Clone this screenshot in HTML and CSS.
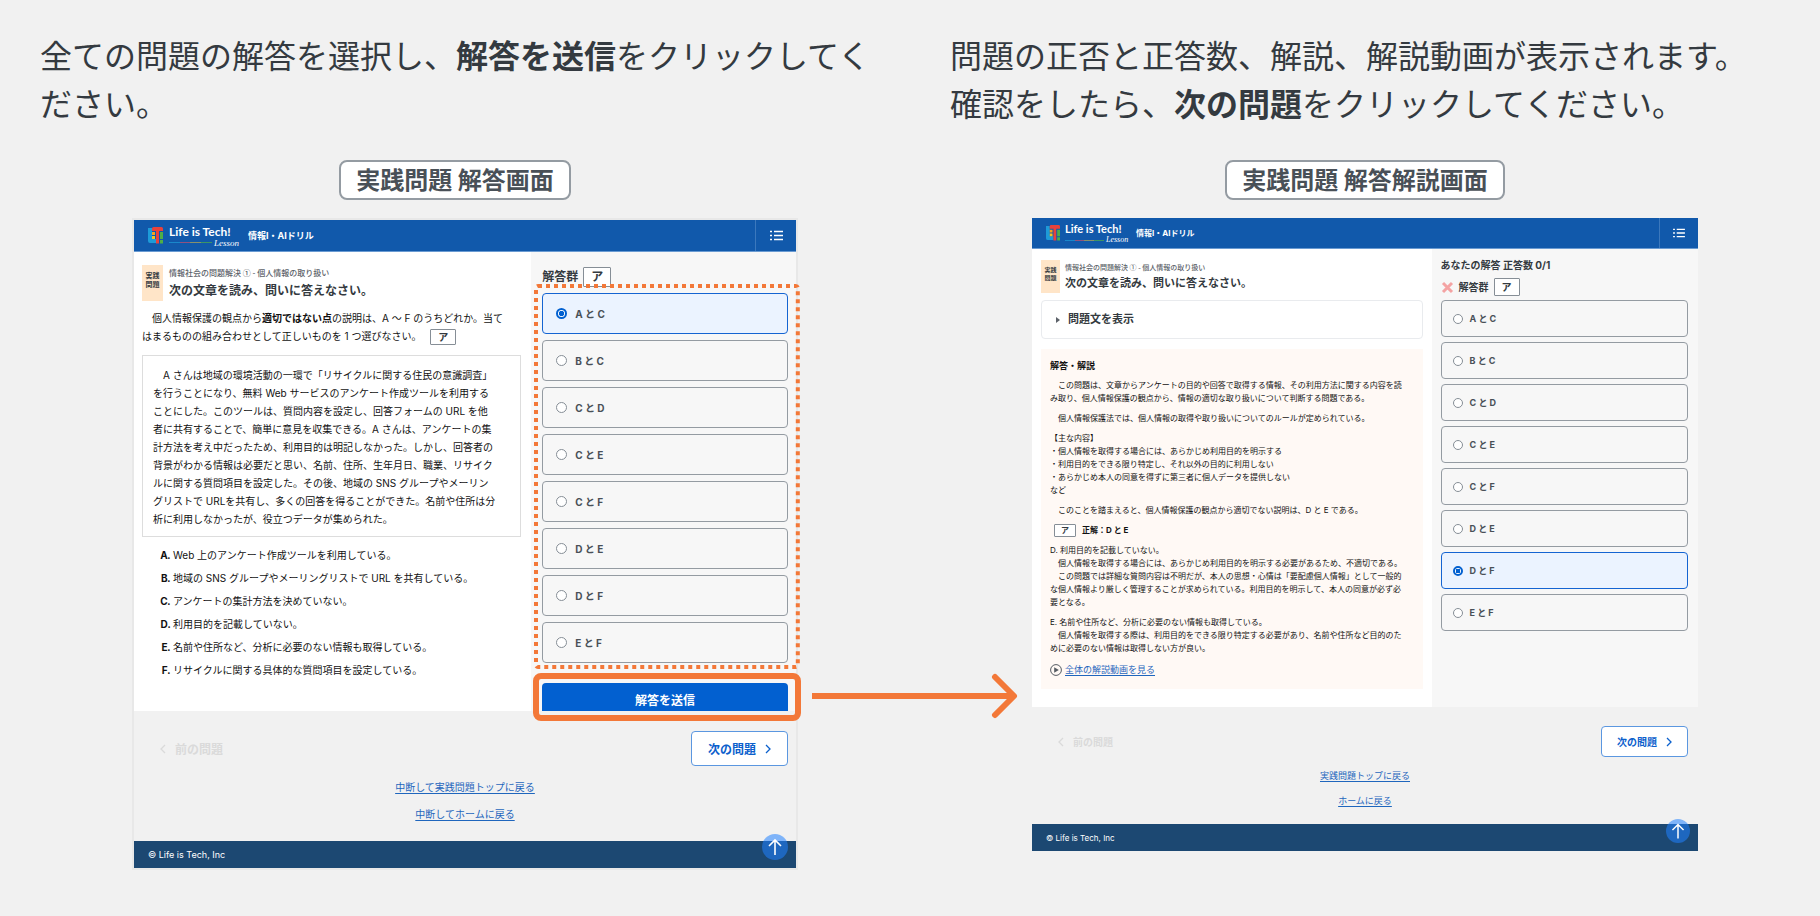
FILE: index.html
```html
<!doctype html>
<html lang="ja">
	<head>
		<meta charset="UTF-8" />
		<meta name="viewport" content="width=device-width, initial-scale=1.0" />
		<title>実践問題の使い方</title>
		<link rel="stylesheet" href="styles.css" />
	</head>
	<body>
		<svg class="sprite" aria-hidden="true">
			<symbol id="logo" viewBox="0 0 15 17">
				<path d="M0 1h4v11h4v4H2a2 2 0 0 1-2-2z" fill="#1d9bd8" />
				<path d="M4 1.500a1.500 1.500 0 0 1 1.500-1.500h8a1.500 1.500 0 0 1 1.500 1.500V4h-4v12.500H8V4H4z" fill="#e8423c" />
				<path d="M4 5h3v3H4z" fill="#f6a21c" />
				<path d="M4 9h3v3H4z" fill="#f7c51e" />
				<path d="M12 5h3v7h-3zM12 13h3v3.500h-3z" fill="#4fae47" />
			</symbol>
			<symbol id="list" viewBox="0 0 13 11">
				<path d="M4 1.500h9M4 5.500h9M4 9.500h9M0 1.500h2M0 5.500h2M0 9.500h2" stroke="#fff" stroke-width="1.400" fill="none" />
			</symbol>
			<symbol id="next" viewBox="0 0 6 10">
				<path d="M1 1l4 4-4 4" stroke="currentColor" stroke-width="1.300" fill="none" />
			</symbol>
			<symbol id="prev" viewBox="0 0 6 10">
				<path d="M5 1L1 5l4 4" stroke="currentColor" stroke-width="1.300" fill="none" />
			</symbol>
			<symbol id="up" viewBox="0 0 26 26">
				<path d="M13 21V6.500M7 12l6-6 6 6" stroke="#fff" stroke-width="1.600" fill="none" />
			</symbol>
		</svg>

		<main class="guide">
			<section class="step">
				<p class="lead">全ての問題の解答を選択し、<b>解答を送信</b>をクリックしてください。</p>
				<h2 class="tag">実践問題 解答画面</h2>

				<div class="screen">
					<header class="bar">
						<svg class="mark"><use href="#logo" /></svg>
						<div class="wordmark">
							<span class="brand">Life is Tech!</span>
							<span class="sub"><span class="stripe"></span><i>Lesson</i></span>
						</div>
						<span class="product">情報I・AIドリル</span>
						<button class="menu" aria-label="メニュー"><svg><use href="#list" /></svg></button>
					</header>

					<div class="main">
						<div class="question">
							<div class="heading">
								<span class="badge">実践<br />問題</span>
								<div>
									<p class="crumb">情報社会の問題解決 ① - 個人情報の取り扱い</p>
									<h3 class="title">次の文章を読み、問いに答えなさい。</h3>
								</div>
							</div>
							<p class="prompt">個人情報保護の観点から<b>適切ではない点</b>の説明は、A ～ F のうちどれか。当て<br />はまるものの組み合わせとして正しいものを 1 つ選びなさい。 <span class="slot">ア</span></p>
							<div class="passage">
								<p>
									A さんは地域の環境活動の一環で「リサイクルに関する住民の意識調査」<br />を行うことになり、無料 Web サービスのアンケート作成ツールを利用する<br />ことにした。このツールは、質問内容を設定し、回答フォームの URL を他<br />者に共有することで、簡単に意見を収集できる。A さんは、アンケートの集<br />計方法を考え中だったため、利用目的は明記しなかった。しかし、回答者の<br />背景がわかる情報は必要だと思い、名前、住所、生年月日、職業、リサイク<br />ルに関する質問項目を設定した。その後、地域の SNS グループやメーリン<br />グリストで URLを共有し、多くの回答を得ることができた。名前や住所は分<br />析に利用しなかったが、役立つデータが集められた。
								</p>
							</div>
							<ol class="choices">
								<li>Web 上のアンケート作成ツールを利用している。</li>
								<li>地域の SNS グループやメーリングリストで URL を共有している。</li>
								<li>アンケートの集計方法を決めていない。</li>
								<li>利用目的を記載していない。</li>
								<li>名前や住所など、分析に必要のない情報も取得している。</li>
								<li>リサイクルに関する具体的な質問項目を設定している。</li>
							</ol>
						</div>

						<div class="answers">
							<div class="group">解答群 <span class="slot">ア</span></div>
							<div class="options">
								<label class="option"><input type="radio" name="answer" checked />A と C</label>
								<label class="option"><input type="radio" name="answer" />B と C</label>
								<label class="option"><input type="radio" name="answer" />C と D</label>
								<label class="option"><input type="radio" name="answer" />C と E</label>
								<label class="option"><input type="radio" name="answer" />C と F</label>
								<label class="option"><input type="radio" name="answer" />D と E</label>
								<label class="option"><input type="radio" name="answer" />D と F</label>
								<label class="option"><input type="radio" name="answer" />E と F</label>
								<svg class="dotted"><rect x="2" y="2" rx="2" /></svg>
							</div>
							<div class="submit">
								<button class="send">解答を送信</button>
								<span class="focus"></span>
								<svg class="arrow" viewBox="0 0 206 46">
									<path d="M0 23h200" />
									<path d="M183 4l19 19-19 19" stroke-linecap="round" />
								</svg>
							</div>
						</div>
					</div>

					<nav class="nav">
						<div class="pager">
							<button class="prev" disabled><svg><use href="#prev" /></svg>前の問題</button>
							<button class="next">次の問題<svg><use href="#next" /></svg></button>
						</div>
						<a href="#">中断して実践問題トップに戻る</a>
						<a href="#">中断してホームに戻る</a>
					</nav>
					<footer class="foot">
						© Life is Tech, Inc
						<button class="top" aria-label="トップへ"><svg><use href="#up" /></svg></button>
					</footer>
				</div>
			</section>

			<section class="step">
				<p class="lead">問題の正否と正答数、解説、解説動画が表示されます。<br />確認をしたら、<b>次の問題</b>をクリックしてください。</p>
				<h2 class="tag">実践問題 解答解説画面</h2>

				<div class="screen result">
					<header class="bar">
						<svg class="mark"><use href="#logo" /></svg>
						<div class="wordmark">
							<span class="brand">Life is Tech!</span>
							<span class="sub"><span class="stripe"></span><i>Lesson</i></span>
						</div>
						<span class="product">情報I・AIドリル</span>
						<button class="menu" aria-label="メニュー"><svg><use href="#list" /></svg></button>
					</header>

					<div class="main">
						<div class="question">
							<div class="heading">
								<span class="badge">実践<br />問題</span>
								<div>
									<p class="crumb">情報社会の問題解決 ① - 個人情報の取り扱い</p>
									<h3 class="title">次の文章を読み、問いに答えなさい。</h3>
								</div>
							</div>
							<details class="reveal">
								<summary>問題文を表示</summary>
							</details>
							<div class="explain">
								<h4>解答・解説</h4>
								<p>　この問題は、文章からアンケートの目的や回答で取得する情報、その利用方法に関する内容を読<br />み取り、個人情報保護の観点から、情報の適切な取り扱いについて判断する問題である。</p>
								<p>　個人情報保護法では、個人情報の取得や取り扱いについてのルールが定められている。</p>
								<p>【主な内容】<br />・個人情報を取得する場合には、あらかじめ利用目的を明示する<br />・利用目的をできる限り特定し、それ以外の目的に利用しない<br />・あらかじめ本人の同意を得ずに第三者に個人データを提供しない<br />など</p>
								<p>　このことを踏まえると、個人情報保護の観点から適切でない説明は、D と E である。</p>
								<p class="correct"><span class="slot">ア</span> <b>正解：D と E</b></p>
								<p>D. 利用目的を記載していない。<br />　個人情報を取得する場合には、あらかじめ利用目的を明示する必要があるため、不適切である。<br />　この問題では詳細な質問内容は不明だが、本人の思想・心情は「要配慮個人情報」として一般的<br />な個人情報より厳しく管理することが求められている。利用目的を明示して、本人の同意が必ず必<br />要となる。</p>
								<p>E. 名前や住所など、分析に必要のない情報も取得している。<br />　個人情報を取得する際は、利用目的をできる限り特定する必要があり、名前や住所など目的のた<br />めに必要のない情報は取得しない方が良い。</p>
								<p class="video">
									<svg viewBox="0 0 12 12">
										<circle cx="6" cy="6" r="5.400" fill="none" stroke="#555b62" />
										<path d="M4.200 3.200L8.800 6l-4.600 2.800z" fill="#555b62" />
									</svg>
									<a href="#">全体の解説動画を見る</a>
								</p>
							</div>
						</div>

						<div class="answers">
							<p class="score">あなたの解答 正答数 0/1</p>
							<div class="group">
								<svg class="wrong" viewBox="0 0 13 13"><path d="M2 2l9 9M11 2l-9 9" /></svg>
								解答群 <span class="slot">ア</span>
							</div>
							<div class="options">
								<label class="option"><input type="radio" name="review" />A と C</label>
								<label class="option"><input type="radio" name="review" />B と C</label>
								<label class="option"><input type="radio" name="review" />C と D</label>
								<label class="option"><input type="radio" name="review" />C と E</label>
								<label class="option"><input type="radio" name="review" />C と F</label>
								<label class="option"><input type="radio" name="review" />D と E</label>
								<label class="option"><input type="radio" name="review" checked />D と F</label>
								<label class="option"><input type="radio" name="review" />E と F</label>
							</div>
						</div>
					</div>

					<nav class="nav">
						<div class="pager">
							<button class="prev" disabled><svg><use href="#prev" /></svg>前の問題</button>
							<button class="next">次の問題<svg><use href="#next" /></svg></button>
						</div>
						<a href="#">実践問題トップに戻る</a>
						<a href="#">ホームに戻る</a>
					</nav>
					<footer class="foot">
						© Life is Tech, Inc
						<button class="top" aria-label="トップへ"><svg><use href="#up" /></svg></button>
					</footer>
				</div>
			</section>
		</main>
	</body>
</html>
```

FILE: styles.css
```css
* {
	box-sizing: border-box;
}
body {
	margin: 0;
	background-color: #f1f1f1;
	color: #111;
	font-family: Inter, "Noto Sans CJK JP", sans-serif;
}
p,
h2,
h3,
h4,
ol {
	margin: 0;
	padding: 0;
}
button {
	padding: 0;
	border: 0;
	font-family: inherit;
	cursor: pointer;
}
.sprite {
	display: none;
}

/* Guide steps */
.guide {
	display: grid;
	grid-template-columns: 1fr 1fr;
	align-items: start;
}
.step {
	display: flex;
	flex-direction: column;
	padding-top: 33px;
}
.lead {
	padding: 0 36px 0 40px;
	font-size: 32px;
	line-height: 48px;
	color: #343a40;
}
.tag {
	align-self: center;
	margin: 31px 0 18px;
	padding: 1px 15px 0;
	border: 2px solid #949ba2;
	border-radius: 8px;
	background-color: #fff;
	color: #495057;
	font-size: 24px;
	line-height: 35px;
}

/* App screen */
.screen {
	margin: 0 112px 0 132px;
	border: 2px solid #e8e8e8;
	font-size: 10px;
	line-height: 18px;
}
.bar {
	display: flex;
	align-items: center;
	height: 32px;
	padding-left: 14px;
	border-bottom: 1px solid #6a9bd2;
	background-color: #1159ab;
	color: #fff;
}
.mark {
	width: 15px;
	height: 17px;
	margin: 0 6px 0 0;
}
.wordmark {
	display: flex;
	flex-direction: column;
	width: 70px;
}
.brand {
	font-family: Lato, sans-serif;
	font-size: 12px;
	font-weight: bold;
	line-height: 14px;
	white-space: nowrap;
}
.sub {
	display: flex;
	align-items: center;
	gap: 2px;
	height: 8px;
	font-family: "Liberation Serif", serif;
	font-size: 9px;
	line-height: 8px;
}
.stripe {
	width: 43px;
	height: 1px;
	background: linear-gradient(90deg, #1d9bd8 25%, #c8506a 25% 50%, #b9a850 50% 75%, #4fae47 75%);
	opacity: 0.7;
}
.product {
	margin-left: 9px;
	font-size: 9px;
	font-weight: bold;
	line-height: 16px;
}
.menu {
	display: flex;
	align-items: center;
	justify-content: center;
	align-self: stretch;
	width: 41px;
	margin-left: auto;
	border-left: 1px solid #3b78bd;
	background: none;
}
.menu svg {
	width: 13px;
	height: 11px;
}

.main {
	display: grid;
	grid-template-columns: 3fr 2fr;
	background-color: #fff;
}
.question {
	padding: 13px 10px 18px 8px;
}
.heading {
	display: flex;
	gap: 6px;
}
.badge {
	width: 21px;
	height: 36px;
	padding-top: 6px;
	background-color: #ffe5c8;
	color: #343a40;
	font-size: 7px;
	font-weight: bold;
	line-height: 9px;
	text-align: center;
}
.crumb {
	color: #5c6269;
	font-family: "Noto Sans CJK JP", sans-serif;
	font-size: 8px;
	font-weight: 500;
	line-height: 16px;
}
.title {
	color: #343a40;
	font-size: 12px;
	line-height: 19px;
}
.prompt {
	margin: 8px 0 10px;
	text-indent: 1em;
	white-space: nowrap;
}
.slot {
	display: inline-block;
	width: 26px;
	border: 1px solid #868e96;
	border-radius: 1px;
	background-color: #fff;
	color: #343a40;
	font-weight: bold;
	line-height: 14px;
	text-align: center;
	text-indent: 0;
	vertical-align: middle;
}
.prompt .slot {
	margin-left: 6px;
}
.passage {
	padding: 10px 10px 8px;
	border: 1px solid #ddd;
	text-indent: 1em;
	white-space: nowrap;
}
.choices {
	display: flex;
	flex-direction: column;
	gap: 5px;
	margin-top: 9px;
	padding-left: 31px;
	list-style: upper-alpha;
}
.choices li::marker {
	font-weight: bold;
}

.answers {
	padding: 15px 8px 0 11px;
	background-color: #f7f7f7;
}
.group {
	display: flex;
	align-items: center;
	gap: 5px;
	color: #343a40;
	font-size: 12px;
	font-weight: bold;
}
.group .slot {
	width: 28px;
	line-height: 18px;
}
.options {
	position: relative;
	display: flex;
	flex-direction: column;
	gap: 6px;
	margin-top: 6px;
}
.option {
	display: flex;
	align-items: center;
	gap: 8px;
	height: 41px;
	padding-left: 13px;
	border: 1px solid #949ba2;
	border-radius: 4px;
	color: #495057;
	font-weight: bold;
}
.option:has(:checked) {
	border-color: #1464d2;
	background-color: #ebf3ff;
}
.option input {
	appearance: none;
	width: 11px;
	height: 11px;
	margin: 0;
	border: 1px solid #868e96;
	border-radius: 50%;
	background-color: #fff;
}
.option input:checked {
	border: 2px solid #0260d0;
	background: radial-gradient(#0260d0 50%, #fff 60%);
}
.dotted {
	position: absolute;
	top: -9px;
	left: -8px;
	width: calc(100% + 20px);
	height: calc(100% + 15px);
	pointer-events: none;
}
.dotted rect {
	width: calc(100% - 4px);
	height: calc(100% - 4px);
	fill: none;
	stroke: #f37838;
	stroke-width: 4px;
	stroke-dasharray: 4 4;
}
.submit {
	position: relative;
	margin-top: 20px;
}
.send {
	display: block;
	width: 100%;
	height: 28px;
	padding-top: 7px;
	border-radius: 4px 4px 0 0;
	background-color: #0260d0;
	color: #fff;
	font-size: 12px;
	font-weight: bold;
	line-height: 18px;
}
.focus {
	position: absolute;
	inset: -10px -13px -10px -9px;
	border: 6px solid #f37838;
	border-radius: 8px;
	pointer-events: none;
}
.arrow {
	position: absolute;
	top: -10px;
	left: calc(100% + 24px);
	width: 206px;
	height: 46px;
	fill: none;
	stroke: #f37838;
	stroke-width: 6px;
	stroke-linejoin: round;
}

.nav {
	display: flex;
	flex-direction: column;
	align-items: center;
	gap: 9px;
	padding: 20px 8px 18px;
}
.pager {
	display: flex;
	align-items: center;
	justify-content: space-between;
	align-self: stretch;
	margin-bottom: 3px;
	padding-left: 18px;
}
.prev,
.next {
	display: flex;
	align-items: center;
	gap: 9px;
	height: 35px;
	font-size: 12px;
	font-weight: bold;
}
.prev {
	background: none;
	color: #dadada;
}
.next {
	padding: 0 16px;
	border: 1px solid #5b97e0;
	border-radius: 4px;
	background-color: #fff;
	color: #0b60cc;
}
.pager svg {
	width: 6px;
	height: 10px;
}
a {
	color: #1f66bd;
	text-underline-offset: 2px;
}
.foot {
	display: flex;
	align-items: center;
	justify-content: space-between;
	height: 27px;
	padding: 0 8px 0 14px;
	background-color: #1c4872;
	color: #fff;
	font-size: 9px;
}
.top {
	width: 26px;
	height: 26px;
	margin-top: -16px;
	border-radius: 50%;
	background-color: rgba(33, 130, 255, 0.55);
}
.top svg {
	display: block;
	width: 100%;
	height: 100%;
}

/* Result screen, drawn a little smaller */
.result {
	margin: 0 122px;
	border: 0;
	font-size: 9px;
	line-height: 16px;
}
.result .bar {
	height: 31px;
}
.result .mark {
	width: 14px;
	height: 16px;
	margin-right: 5px;
}
.result .wordmark {
	width: 64px;
}
.result .brand {
	font-size: 11px;
}
.result .stripe {
	width: 39px;
}
.result .sub,
.result .product {
	font-size: 8px;
}
.result .product {
	margin-left: 7px;
}
.result .menu {
	width: 39px;
}
.result .menu svg {
	width: 12px;
	height: 10px;
}
.result .question {
	padding: 11px 9px 18px;
}
.result .heading {
	gap: 5px;
}
.result .badge {
	width: 19px;
	height: 33px;
	font-size: 6px;
	line-height: 8px;
}
.result .crumb {
	font-size: 7px;
	line-height: 15px;
}
.result .title {
	font-size: 11px;
	line-height: 17px;
}
.reveal {
	margin: 7px 0 10px;
	border: 1px solid #e9ebee;
	border-radius: 4px;
	color: #343a40;
	font-size: 11px;
	font-weight: bold;
}
.reveal summary {
	display: flex;
	align-items: center;
	gap: 8px;
	padding: 0 14px;
	line-height: 37px;
}
.reveal summary::before {
	content: "";
	border: 3px solid transparent;
	border-left: 4px solid #5c6269;
	border-right: 0;
}
.explain {
	display: flex;
	flex-direction: column;
	gap: 7px;
	padding: 10px 9px 11px;
	background-color: #fff9f5;
	font-size: 8px;
	line-height: 13px;
	white-space: nowrap;
}
.explain h4 {
	font-size: 9px;
}
.correct {
	display: flex;
	gap: 6px;
	padding-left: 4px;
}
.correct .slot {
	width: 22px;
	line-height: 11px;
}
.video {
	display: flex;
	align-items: center;
	gap: 3px;
	font-size: 9px;
	line-height: 16px;
}
.video svg {
	width: 12px;
	height: 12px;
}
.result .answers {
	padding: 8px 10px 0 9px;
}
.score {
	color: #343a40;
	font-size: 10px;
	font-weight: bold;
}
.result .group {
	margin-top: 5px;
	font-size: 10px;
}
.result .group .slot {
	width: 26px;
	line-height: 16px;
}
.wrong {
	width: 13px;
	height: 13px;
	stroke: #f4a3a3;
	stroke-width: 3px;
}
.result .options {
	gap: 5px;
	margin-top: 4px;
}
.result .option {
	gap: 7px;
	height: 37px;
	padding-left: 11px;
}
.result .option input {
	width: 10px;
	height: 10px;
}
.result .nav {
	padding: 19px 10px 15px;
}
.result .pager {
	margin-bottom: 2px;
	padding-left: 16px;
}
.result .prev,
.result .next {
	height: 31px;
	font-size: 10px;
}
.result .next {
	padding: 0 15px;
}
.result .foot {
	font-size: 8px;
}
.result .top {
	width: 24px;
	height: 24px;
	margin-top: -14px;
}
```
